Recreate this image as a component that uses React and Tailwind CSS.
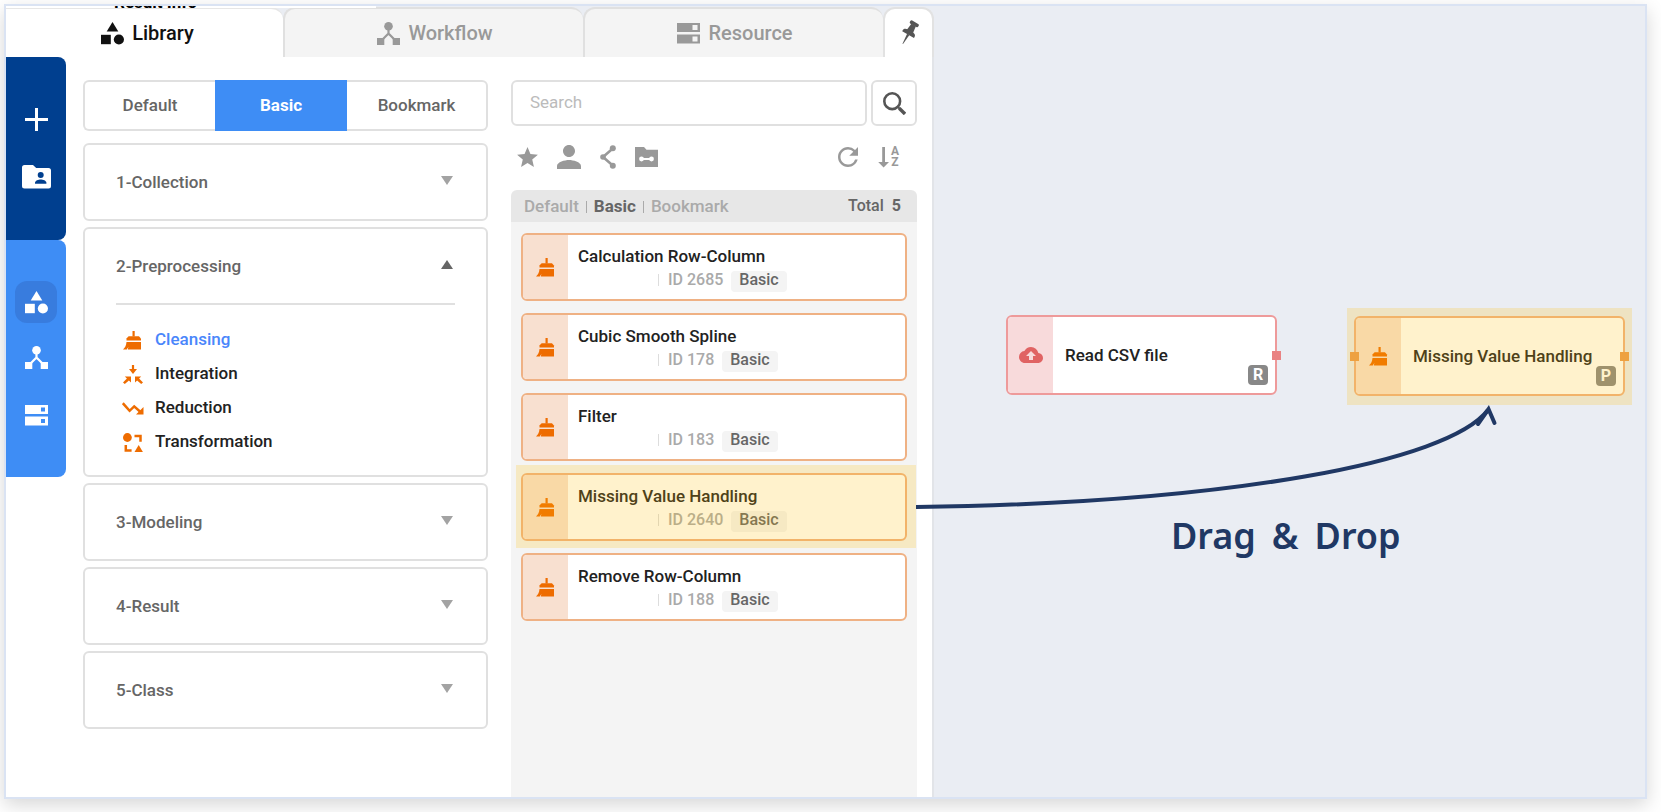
import React from "react";
import { MdStar, MdPerson, MdCloudUpload, MdRefresh } from "react-icons/md";

function ShapesIcon() {
  return (
    <svg width="23" height="23" viewBox="0 0 23 23" fill="currentColor" aria-hidden="true">
      <path d="M11.5 0 17.3 9.6H5.7z" />
      <rect x="0" y="12.8" width="9.8" height="9.4" />
      <circle cx="17.9" cy="17.5" r="5.1" />
    </svg>
  );
}

function NodesIcon() {
  return (
    <svg width="23" height="23" viewBox="0 0 23 23" aria-hidden="true">
      <path d="M11.5 6v6M11.5 11.5 4 19M11.5 11.5 19 19" stroke="currentColor" strokeWidth="2.2" fill="none" />
      <g fill="currentColor">
        <circle cx="11.5" cy="4.3" r="4.3" />
        <rect x="0" y="16" width="7.3" height="7" />
        <rect x="15.7" y="16" width="7.3" height="7" />
      </g>
    </svg>
  );
}

function ServerIcon({ hole = 5 }) {
  const inset = (9 - hole) / 2;
  return (
    <svg width="23" height="21" viewBox="0 0 23 21" aria-hidden="true">
      <path
        fill="currentColor"
        fillRule="evenodd"
        d={`M0 0h23v9H0zM${18 - hole / 2} ${inset}h${hole}v${hole}h-${hole}zM0 11.5h23v9H0zM${18 - hole / 2} ${11.5 + inset}h${hole}v${hole}h-${hole}z`}
      />
    </svg>
  );
}

function PinIcon() {
  return (
    <svg width="20" height="26" viewBox="0 0 20 26" fill="currentColor" aria-hidden="true">
      <g transform="rotate(30 10 13)">
        <rect x="5.2" y="0.6" width="9.6" height="3.6" rx="1.4" />
        <path d="M7.4 3.8h5.200l.9 7.400h-7z" />
        <path d="M3.200 14.800v-1.300c0-1.800 1.600-3 3.600-3h6.400c2 0 3.600 1.200 3.600 3v1.300z" />
        <path d="M8.700 14.500h2.600L10.300 25.500h-.6z" />
      </g>
    </svg>
  );
}

function SearchIcon() {
  return (
    <svg width="23" height="23" viewBox="0 0 23 23" fill="none" stroke="currentColor" aria-hidden="true">
      <circle cx="9.200" cy="9.200" r="7.900" strokeWidth="2.600" />
      <path d="M14.600 14.600 17 17" strokeWidth="2" />
      <path d="M16.200 16.200 22 22" strokeWidth="3.400" />
    </svg>
  );
}

function FolderUserIcon() {
  return (
    <svg width="29" height="24" viewBox="0 0 29 24" aria-hidden="true">
      <path fill="currentColor" d="M2.500 0h8.500l3.200 3H26.500A2.500 2.500 0 0 1 29 5.500V21a2.500 2.500 0 0 1-2.500 2.500h-24A2.500 2.500 0 0 1 0 21V2.500A2.500 2.500 0 0 1 2.500 0z" />
      <circle cx="18.700" cy="10" r="3" fill="#003f8f" />
      <path d="M13 18.800v-1c0-2.100 3.500-3.300 5.700-3.300s5.700 1.200 5.700 3.300v1z" fill="#003f8f" />
    </svg>
  );
}

function BroomIcon() {
  return (
    <svg width="19" height="19" viewBox="0 0 19 19" fill="currentColor" aria-hidden="true">
      <path d="M9.500 0h2.200v5.500h-2.200z" />
      <path d="M3.500 9.600V7.400L5.600 5.200h10.300l2.100 2.200v2.200z" />
      <path d="M3.500 11H18v7.500H4.800l.6-2.600-1.700 2.600H0c2-1.700 3.200-4 3.500-7.500z" />
    </svg>
  );
}

function IntegrationIcon() {
  return (
    <svg width="20" height="19" viewBox="0 0 20 19" fill="currentColor" aria-hidden="true">
      <path d="M8.900 0h2.200v4H14L10 9 6 4h2.900z" />
      <path d="M1.800 11.500H8V17.600L5.900 15.600 1.800 19 0 17.400 3.900 13.600z" />
      <path d="M18.200 11.500H12V17.600L14.100 15.600 18.200 19 20 17.400 16.100 13.600z" />
    </svg>
  );
}

function ReductionIcon() {
  return (
    <svg width="22" height="13" viewBox="0 0 22 13" aria-hidden="true">
      <path d="M.8 1.200 7.600 8.800 12.200 4.400 18.500 10" fill="none" stroke="currentColor" strokeWidth="2.500" />
      <path d="M21.500 5v7.500H14z" fill="currentColor" />
    </svg>
  );
}

function TransformationIcon() {
  return (
    <svg width="20" height="19" viewBox="0 0 20 19" aria-hidden="true">
      <path d="M11.500 3h6v5.800M2.800 12v5.600h5.800" fill="none" stroke="currentColor" strokeWidth="2.500" />
      <circle cx="4.400" cy="4.500" r="4.400" fill="currentColor" />
      <path d="M15.700 12 19.900 19h-8.400z" fill="currentColor" />
    </svg>
  );
}

function ShareIcon() {
  return (
    <svg width="16" height="24" viewBox="0 0 16 24" aria-hidden="true">
      <path d="M12.800 3.500 3 12l9.800 8.500" fill="none" stroke="currentColor" strokeWidth="2.600" />
      <g fill="currentColor">
        <circle cx="12.800" cy="3.300" r="3" />
        <circle cx="3" cy="12" r="2.800" />
        <circle cx="12.800" cy="20.700" r="3" />
      </g>
    </svg>
  );
}

function FolderLinkIcon() {
  return (
    <svg width="23" height="20" viewBox="0 0 23 20" aria-hidden="true">
      <path d="M0 0h9l2.500 2.800H23V20H0z" fill="currentColor" />
      <path d="M7 12h9" stroke="#fff" strokeWidth="2" />
      <circle cx="6.500" cy="12" r="2.400" fill="#fff" />
      <circle cx="16.500" cy="12" r="2.400" fill="#fff" />
    </svg>
  );
}

function SortIcon() {
  return (
    <span className="flex items-center gap-[2px]" aria-hidden="true">
      <svg width="11" height="21" viewBox="0 0 11 21" fill="currentColor">
        <path d="M4.200 0h2.800v15H11L5.600 20.500.2 15h4z" />
      </svg>
      <span className="flex flex-col text-xs leading-[11px] font-bold">
        <span>A</span>
        <span>Z</span>
      </span>
    </span>
  );
}

function Caret({ open }) {
  return (
    <svg width="12" height="9" viewBox="0 0 12 9" aria-hidden="true" className={open ? "text-[#666]" : "text-[#a3a3a3]"}>
      <path d={open ? "M6 0 12 9H0z" : "M0 0h12L6 9z"} fill="currentColor" />
    </svg>
  );
}

function Tab({ icon, label, active }) {
  return (
    <button
      role="tab"
      aria-selected={!!active}
      className={
        active
          ? "flex w-[277px] items-center justify-center gap-2 rounded-tr-xl border-t-2 border-[#e6e6e6] bg-white pl-[6px] text-xl font-medium text-[#111]"
          : "flex flex-1 items-center justify-center gap-2 rounded-t-xl border-t-2 border-l-2 border-[#e0e0e0] bg-[#f4f4f4] pl-[2px] text-xl font-medium text-[#999]"
      }
    >
      {icon}
      {label}
    </button>
  );
}

function Section({ title, children }) {
  const open = !!children;
  return (
    <section className="rounded-md border-2 border-[#e0e0e0] bg-white">
      <button aria-expanded={open} className="flex h-[74px] w-full items-center justify-between pr-[33px] pl-[31px] text-left text-[17px] font-medium text-[#666]">
        <span className="pt-[2px]">{title}</span>
        <span className="pb-1">
          <Caret open={open} />
        </span>
      </button>
      {children}
    </section>
  );
}

const methods = [
  { name: "Cleansing", icon: <BroomIcon />, active: true },
  { name: "Integration", icon: <IntegrationIcon /> },
  { name: "Reduction", icon: <ReductionIcon /> },
  { name: "Transformation", icon: <TransformationIcon /> },
];

const functions = [
  { name: "Calculation Row-Column", id: 2685 },
  { name: "Cubic Smooth Spline", id: 178 },
  { name: "Filter", id: 183 },
  { name: "Missing Value Handling", id: 2640, picked: true },
  { name: "Remove Row-Column", id: 188 },
];

function FunctionCard({ name, id, picked }) {
  return (
    <li className="relative">
      <div className="flex h-[68px] overflow-hidden rounded-md border-2 border-[#efb184] bg-white">
        <div className="flex w-[45px] items-center justify-center bg-[#f8e0d0] text-[#ee6c00]">
          <BroomIcon />
        </div>
        <div className="pt-[9px] pl-[10px]">
          <div className="text-[17px] leading-6 font-medium text-[#222]">{name}</div>
          <div className="ml-20 flex items-start">
            <span className="mt-[6px] h-3 w-px bg-[#ddd]" />
            <span className="ml-[9px] text-base leading-6 font-medium text-[#aaa]">ID {id}</span>
            <span className="mt-[3px] ml-2 rounded-sm bg-[#f4f4f4] px-2 pb-[3px] text-base leading-[18px] font-medium text-[#666]">Basic</span>
          </div>
        </div>
      </div>
      {picked && <div className="pointer-events-none absolute -top-2 -right-[9px] -bottom-[7px] -left-[5px] bg-[#ffc000]/20" />}
    </li>
  );
}

function Node({ label, icon, badge, tone, hasInput }) {
  const red = tone === "red";
  const port = red ? "bg-[#e98282]" : "bg-[#ea9a52]";
  return (
    <div className="relative">
      <div className={`flex h-20 w-[271px] overflow-hidden rounded-md border-2 bg-white ${red ? "border-[#ee9a9a]" : "border-[#efb184]"}`}>
        <div className={`flex w-[45px] items-center justify-center ${red ? "bg-[#f8dadb] text-[#e06363]" : "bg-[#f8e0d0] text-[#ee6c00]"}`}>{icon}</div>
        <div className="flex items-center pt-[2px] pl-3 text-[17px] font-medium text-[#222]">{label}</div>
      </div>
      {hasInput && <span className={`absolute top-[36px] -left-1 size-[9px] ${port}`} />}
      <span className={`absolute top-[36px] -right-1 size-[9px] ${port}`} />
      <span className="absolute right-[9px] bottom-[10px] flex size-5 items-center justify-center rounded-sm bg-[#888] text-base font-bold text-white">{badge}</span>
    </div>
  );
}

export default function App() {
  return (
    <div className="flex min-h-screen bg-white pt-1 pr-[14px] pb-[13px] pl-1 font-[Roboto,sans-serif]">
      <div className="flex flex-1 border-2 border-[#dae3f3] bg-[#eaedf3] shadow-[0_6px_18px_rgba(0,0,0,0.16)]">
        <div className="flex w-[928px] shrink-0 flex-col">
          <div role="tablist" className="relative mt-px flex h-[50px]">
            <div className="absolute -top-px left-0 h-[2px] w-[370px] overflow-hidden bg-white">
              <span className="absolute bottom-[-4px] left-[108px] text-[17px] leading-5 font-bold text-black">Result Info</span>
            </div>
            <Tab icon={<ShapesIcon />} label="Library" active />
            <Tab icon={<NodesIcon />} label="Workflow" />
            <Tab icon={<ServerIcon />} label="Resource" />
            <button aria-label="Pin panel" className="flex w-[51px] items-center justify-center rounded-t-xl border-2 border-b-0 border-[#e2e2e2] bg-white text-[#555]">
              <PinIcon />
            </button>
          </div>

          <div className="flex flex-1 border-r-2 border-[#e2e4e8] bg-white">
            <nav className="w-[60px] text-white">
              <div className="flex h-[183px] flex-col items-center rounded-r-lg bg-[#003f8f] pt-[51px]">
                <button aria-label="New">
                  <svg width="23" height="23" viewBox="0 0 23 23" aria-hidden="true">
                    <path d="M11.500 0v23M0 11.500h23" stroke="currentColor" strokeWidth="3" />
                  </svg>
                </button>
                <button aria-label="Projects" className="mt-[34px]">
                  <FolderUserIcon />
                </button>
              </div>
              <div className="flex h-[237px] flex-col items-center rounded-r-lg bg-[#3e8df5] pt-[41px]">
                <button aria-label="Library" className="flex size-[42px] items-center justify-center rounded-xl bg-[#387cde]">
                  <ShapesIcon />
                </button>
                <button aria-label="Workflow" className="mt-[23px]">
                  <NodesIcon />
                </button>
                <button aria-label="Resource" className="mt-[36px]">
                  <ServerIcon hole={4} />
                </button>
              </div>
            </nav>

            <div className="ml-[17px] w-[405px] pt-[23px]">
              <div className="flex h-[51px] text-[17px] font-medium text-[#666]">
                <button className="w-[132px] rounded-l-md border-2 border-r-0 border-[#e0e0e0] bg-white">Default</button>
                <button aria-pressed="true" className="w-[132px] bg-[#3e8df5] font-bold text-white">Basic</button>
                <button className="flex-1 rounded-r-md border-2 border-l-0 border-[#e0e0e0] bg-white">Bookmark</button>
              </div>

              <div className="mt-3 flex flex-col gap-[6px]">
                <Section title="1-Collection" />
                <Section title="2-Preprocessing">
                  <ul className="mx-[31px] border-t-2 border-[#e0e0e0] pt-[18px] pb-4 text-[17px] font-medium text-[#222]">
                    {methods.map((m) => (
                      <li key={m.name} className="h-[34px]">
                        <button className={`flex h-full items-center ${m.active ? "text-[#4a86fb]" : ""}`}>
                          <span className="flex w-[33px] justify-center text-[#ee6c00]">{m.icon}</span>
                          <span className="pl-[6px]">{m.name}</span>
                        </button>
                      </li>
                    ))}
                  </ul>
                </Section>
                <Section title="3-Modeling" />
                <Section title="4-Result" />
                <Section title="5-Class" />
              </div>
            </div>

            <div className="ml-[23px] flex w-[406px] flex-col pt-[23px]">
              <form className="flex h-[46px] gap-1" onSubmit={(e) => e.preventDefault()}>
                <input
                  type="search"
                  aria-label="Search"
                  placeholder="Search"
                  className="min-w-0 flex-1 rounded-md border-2 border-[#e0e0e0] bg-white px-[17px] text-[17px] outline-none placeholder:text-[#bbb]"
                />
                <button aria-label="Run search" className="flex w-[46px] items-center justify-center rounded-md border-2 border-[#e0e0e0] bg-white text-[#555]">
                  <SearchIcon />
                </button>
              </form>

              <div className="flex h-16 items-center gap-[19px] pr-[18px] pb-[2px] pl-[6px] text-[#999]">
                <button aria-label="Favorites" className="-mx-[2px]"><MdStar size={25} /></button>
                <button aria-label="Mine" className="-mx-[6px]"><MdPerson size={36} /></button>
                <button aria-label="Shared"><ShareIcon /></button>
                <button aria-label="Linked folder"><FolderLinkIcon /></button>
                <button aria-label="Refresh" className="-mr-1 ml-auto"><MdRefresh size={30} /></button>
                <button aria-label="Sort by name"><SortIcon /></button>
              </div>

              <div className="flex h-8 items-center justify-between rounded-t-md bg-[#e7e7e7] pr-4 pl-[13px] text-[17px] font-medium text-[#aaa]">
                <div className="flex items-center gap-[7px] pt-[2px]">
                  <span>Default</span>
                  <span className="h-3 w-px bg-[#aaa]" />
                  <span className="font-bold text-[#666]">Basic</span>
                  <span className="h-3 w-px bg-[#aaa]" />
                  <span>Bookmark</span>
                </div>
                <div className="flex gap-2 text-base text-[#666]">
                  <span>Total</span>
                  <span className="font-bold">5</span>
                </div>
              </div>

              <ul className="flex flex-1 flex-col gap-3 bg-[#f4f4f4] px-[10px] pt-[11px]">
                {functions.map((f) => (
                  <FunctionCard key={f.id} {...f} />
                ))}
              </ul>
            </div>
          </div>
        </div>

        <main className="relative flex-1">
          <div className="absolute top-[309px] left-[72px]">
            <Node label="Read CSV file" icon={<MdCloudUpload size={24} />} badge="R" tone="red" />
          </div>
          <div className="absolute top-[310px] left-[420px]">
            <Node label="Missing Value Handling" icon={<BroomIcon />} badge="P" tone="orange" hasInput />
            <div className="pointer-events-none absolute -top-2 -right-[7px] -bottom-[9px] -left-[7px] bg-[#ffc000]/20" />
          </div>
          <svg className="pointer-events-none absolute top-[394px] -left-[18px]" width="600" height="120" viewBox="0 0 600 120" fill="none" aria-hidden="true">
            <g stroke="#203864" strokeWidth="4">
              <path d="M0 107C314 103 532 62 572 10" />
              <path d="M562 24 572.500 9 578.500 23" strokeLinecap="round" />
            </g>
          </svg>
          <p className="absolute top-[505px] left-[237px] flex gap-4 font-['Noto_Sans',sans-serif] text-4xl leading-[50px] font-semibold text-[#203864]">
            <span>Drag</span> <span>&amp;</span> <span>Drop</span>
          </p>
        </main>
      </div>
    </div>
  );
}
